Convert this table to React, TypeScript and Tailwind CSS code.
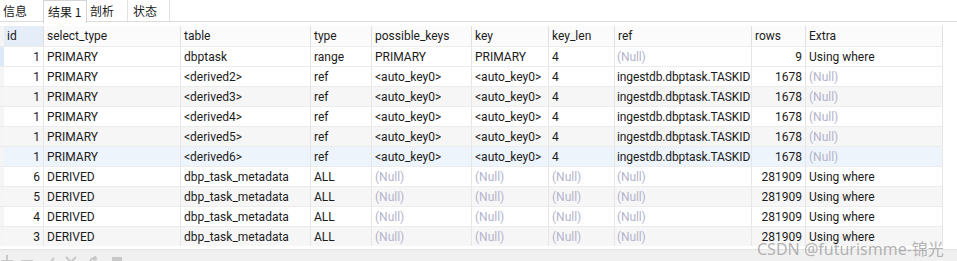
import React from "react";

const cols = [
  { w: 40, right: true },
  { w: 137 },
  { w: 130 },
  { w: 61 },
  { w: 100 },
  { w: 77 },
  { w: 66 },
  { w: 137 },
  { w: 54, right: true },
  { w: 137 },
];

const headers = ["id", "select_type", "table", "type", "possible_keys", "key", "key_len", "ref", "rows", "Extra"];

const N = "(Null)";
const rows: string[][] = [
  ["1", "PRIMARY", "dbptask", "range", "PRIMARY", "PRIMARY", "4", N, "9", "Using where"],
  ["1", "PRIMARY", "<derived2>", "ref", "<auto_key0>", "<auto_key0>", "4", "ingestdb.dbptask.TASKID", "1678", N],
  ["1", "PRIMARY", "<derived3>", "ref", "<auto_key0>", "<auto_key0>", "4", "ingestdb.dbptask.TASKID", "1678", N],
  ["1", "PRIMARY", "<derived4>", "ref", "<auto_key0>", "<auto_key0>", "4", "ingestdb.dbptask.TASKID", "1678", N],
  ["1", "PRIMARY", "<derived5>", "ref", "<auto_key0>", "<auto_key0>", "4", "ingestdb.dbptask.TASKID", "1678", N],
  ["1", "PRIMARY", "<derived6>", "ref", "<auto_key0>", "<auto_key0>", "4", "ingestdb.dbptask.TASKID", "1678", N],
  ["6", "DERIVED", "dbp_task_metadata", "ALL", N, N, N, N, "281909", "Using where"],
  ["5", "DERIVED", "dbp_task_metadata", "ALL", N, N, N, N, "281909", "Using where"],
  ["4", "DERIVED", "dbp_task_metadata", "ALL", N, N, N, N, "281909", "Using where"],
  ["3", "DERIVED", "dbp_task_metadata", "ALL", N, N, N, N, "281909", "Using where"],
];

const rowBg = ["bg-white", "bg-white", "bg-[#f6f6f6]", "bg-white", "bg-[#f6f6f6]", "bg-[#eef4fb]", "bg-white", "bg-[#f6f6f6]", "bg-white", "bg-[#f6f6f6]"];

export default function App() {
  return (
    <div
      className="relative w-[957px] h-[261px] overflow-hidden bg-white text-[12px] text-[#1b1b1b]"
      style={{ fontFamily: 'Roboto, "Noto Sans CJK SC", sans-serif' }}
    >
      {/* Tabs */}
      <div className="flex h-[22px] border-b border-[#dcdcdc] items-stretch" style={{ fontFamily: '"Noto Sans CJK SC", sans-serif' }}>
        <div className="w-[43px] pl-[3px] flex items-center">信息</div>
        <div className="w-[44px] flex items-center pl-[4px] border-x border-t border-[#d4d4d4] bg-white h-[23px] -mb-px">结果 1</div>
        <div className="w-[41px] pl-[3px] flex items-center border-r border-[#e2e2e2]">剖析</div>
        <div className="w-[42px] pl-[5px] flex items-center border-r border-[#e2e2e2]">状态</div>
      </div>
      <div className="h-[4px]" />
      {/* Header */}
      <div className="flex h-[20px]">
        <div className="w-[4px] bg-[#f5f5f5]" />
        {headers.map((h, i) => (
          <div
            key={h}
            className={`flex items-center pl-[3px] border-r border-[#e0e0e0] ${i === 0 ? "bg-[#e5eef8]" : "bg-[#fbfbfb]"}`}
            style={{ width: cols[i].w }}
          >
            {h}
          </div>
        ))}
      </div>
      {/* Rows */}
      {rows.map((r, ri) => (
        <div key={ri} className={`flex h-[20px] border-t border-[#ececec] ${rowBg[ri]}`} style={{ width: 943 }}>
          <div className={`w-[4px] ${ri === 0 ? "bg-[#dce8f5]" : "bg-[#f5f5f5]"}`} />
          {r.map((c, ci) => (
            <div
              key={ci}
              className={`flex items-center border-r border-[#e6e6e6] whitespace-nowrap overflow-hidden ${cols[ci].right ? "justify-end pr-[3px]" : ci === 7 ? "pl-[2px] tracking-[-0.12px]" : "pl-[3px]"} ${c === N ? "text-[#b4b4cc]" : ""}`}
              style={{ width: cols[ci].w }}
            >
              {c}
            </div>
          ))}
        </div>
      ))}
      {/* Bottom toolbar */}
      <div className="absolute left-0 right-0 top-[249px] h-[12px] bg-[#f0f0f0] border-t border-[#e4e4e4]">
        <svg width="140" height="12" className="absolute left-0 top-[5px]" stroke="#c8c8c8" strokeWidth="2" fill="none">
          <path d="M7 0 V12 M1 6 H13" />
          <path d="M21 6 H33" />
          <path d="M43 7 L47 11 L54 3" />
          <path d="M66 2 L76 12 M76 2 L66 12" />
          <path d="M95 3 A4 4 0 1 0 98 8 M95 1 L96 4 L93 5" />
          <rect x="112" y="2" width="10" height="10" fill="#c8c8c8" stroke="none" />
        </svg>
      </div>
      {/* Watermark */}
      <div
        className="absolute left-[757px] top-[237px] text-[16px] text-[#a0a0a0]/80 whitespace-nowrap"
        style={{ fontFamily: '"Noto Sans", "Noto Sans CJK SC", sans-serif' }}
      >
        CSDN @futurismme-锦光
      </div>
    </div>
  );
}
